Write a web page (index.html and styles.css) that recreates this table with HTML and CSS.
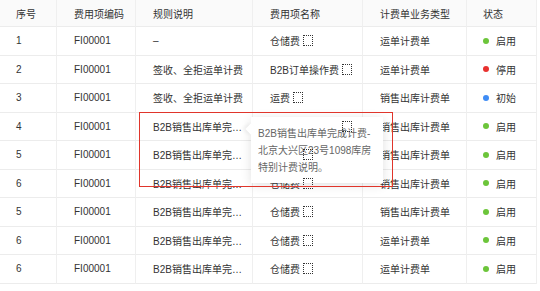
FILE: index.html
```html
<!DOCTYPE html>
<html lang="zh">
<head>
<meta charset="utf-8">
<link rel="stylesheet" href="styles.css">
</head>
<body>
<div class="wrap">
  <div class="table">
    <div class="c h">序号</div><div class="c h">费用项编码</div><div class="c h">规则说明</div><div class="c h">费用项名称</div><div class="c h">计费单业务类型</div><div class="c h">状态</div>

    <div class="c r">1</div><div class="c r">FI00001</div><div class="c r">–</div><div class="c r">仓储费<span class="ico"></span></div><div class="c r">运单计费单</div><div class="c r"><span class="dot green"></span>启用</div>

    <div class="c r">2</div><div class="c r">FI00001</div><div class="c r">签收、全拒运单计费</div><div class="c r">B2B订单操作费<span class="ico"></span></div><div class="c r">运单计费单</div><div class="c r"><span class="dot red"></span>停用</div>

    <div class="c r">3</div><div class="c r">FI00001</div><div class="c r">签收、全拒运单计费</div><div class="c r">运费<span class="ico"></span></div><div class="c r">销售出库计费单</div><div class="c r"><span class="dot blue"></span>初始</div>

    <div class="c r">4</div><div class="c r">FI00001</div><div class="c r"><span class="ell">B2B销售出库单完成计费-北京大兴区23号1098库房特别计费说明。</span></div><div class="c r">B2B订单操作费<span class="ico"></span></div><div class="c r">销售出库计费单</div><div class="c r"><span class="dot green"></span>启用</div>

    <div class="c r">5</div><div class="c r">FI00001</div><div class="c r"><span class="ell">B2B销售出库单完成计费-北京大兴区23号1098库房特别计费说明。</span></div><div class="c r">仓储费<span class="ico"></span></div><div class="c r">销售出库计费单</div><div class="c r"><span class="dot green"></span>启用</div>

    <div class="c r">6</div><div class="c r">FI00001</div><div class="c r"><span class="ell">B2B销售出库单完成计费-北京大兴区23号1098库房特别计费说明。</span></div><div class="c r">仓储费<span class="ico"></span></div><div class="c r">销售出库计费单</div><div class="c r"><span class="dot green"></span>启用</div>

    <div class="c r">5</div><div class="c r">FI00001</div><div class="c r"><span class="ell">B2B销售出库单完成计费-北京大兴区23号1098库房特别计费说明。</span></div><div class="c r">仓储费<span class="ico"></span></div><div class="c r">销售出库计费单</div><div class="c r"><span class="dot green"></span>启用</div>

    <div class="c r">6</div><div class="c r">FI00001</div><div class="c r"><span class="ell">B2B销售出库单完成计费-北京大兴区23号1098库房特别计费说明。</span></div><div class="c r">仓储费<span class="ico"></span></div><div class="c r">运单计费单</div><div class="c r"><span class="dot green"></span>启用</div>

    <div class="c r">6</div><div class="c r">FI00001</div><div class="c r"><span class="ell">B2B销售出库单完成计费-北京大兴区23号1098库房特别计费说明。</span></div><div class="c r">仓储费<span class="ico"></span></div><div class="c r">运单计费单</div><div class="c r"><span class="dot green"></span>启用</div>
  </div>

  <div class="tip">
    <span class="arrow"></span>
    <p class="tip-text">B2B销售出库单完成计费-北京大兴区23号1098库房特别计费说明。</p>
  </div>
  <div class="mark"></div>
</div>
</body>
</html>
```

FILE: styles.css
```css
html, body {
  margin: 0;
  padding: 0;
  background: #fff;
}
body {
  font-family: "Liberation Sans", "Noto Sans CJK SC", sans-serif;
  font-size: 10px;
  color: #333;
  overflow: hidden;
}
.wrap {
  position: relative;
  width: 540px;
  height: 291px;
  overflow: hidden;
}
.table {
  display: grid;
  grid-template-columns: 57px 79px 117px 110px 104px 70px;
  grid-template-rows: 27px repeat(9, 28.5px);
  width: 537px;
}
.c {
  display: flex;
  align-items: center;
  padding-left: 17px;
  border-right: 1px solid #efefef;
  border-bottom: 1px solid #ececec;
  white-space: nowrap;
  overflow: visible;
  box-sizing: border-box;
  min-width: 0;
}
.c:nth-child(6n+1) {
  padding-left: 16px;
}
.c:nth-child(6n) {
  padding-left: 16px;
}
.h {
  background: #fafafa;
  color: #333;
}
.ell {
  display: block;
  width: 90px;
  overflow: hidden;
  text-overflow: ellipsis;
  white-space: nowrap;
}
.ico {
  position: relative;
  z-index: 3;
  display: inline-block;
  width: 8px;
  height: 9px;
  margin-left: 3px;
  border: 1px dotted #333;
  box-sizing: content-box;
}
.dot {
  display: inline-block;
  width: 6px;
  height: 6px;
  border-radius: 50%;
  margin-right: 7px;
}
.green { background: #6cc53a; }
.red { background: #e8312f; }
.blue { background: #3f8cf5; }

.tip {
  position: absolute;
  z-index: 2;
  left: 251px;
  top: 117px;
  width: 132px;
  height: 66px;
  background: #fff;
  box-shadow: 0 2px 10px rgba(0, 0, 0, 0.12);
  box-sizing: border-box;
  padding: 8px 6px 0 7px;
}
.arrow {
  position: absolute;
  left: -4px;
  top: 8px;
  width: 8px;
  height: 8px;
  background: #fff;
  transform: rotate(45deg);
  box-shadow: -2px 2px 4px rgba(0, 0, 0, 0.06);
}
.tip-text {
  position: relative;
  margin: 0;
  color: #666;
  line-height: 17px;
  word-break: break-all;
}
.mark {
  position: absolute;
  z-index: 4;
  left: 139px;
  top: 112px;
  width: 254px;
  height: 75px;
  border: 1px solid #e0352b;
  box-sizing: border-box;
  pointer-events: none;
}
```
